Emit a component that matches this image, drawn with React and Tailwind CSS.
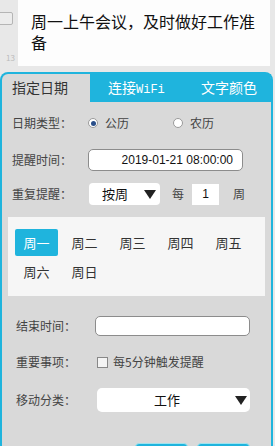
const CYAN = 'bg-[#1fb4dd]'

const DAYS = ['周一', '周二', '周三', '周四', '周五', '周六', '周日']

function Radio({ checked }) {
  return (
    <span className="w-[10px] h-[10px] rounded-full border border-[#9a9a9a] bg-white flex items-center justify-center">
      {checked && <span className="w-[5px] h-[5px] rounded-full bg-[#2a4f8a]" />}
    </span>
  )
}

function Arrow() {
  return (
    <svg width="12" height="9" viewBox="0 0 12 9">
      <path d="M0 0 L12 0 L6 9 Z" fill="#222" />
    </svg>
  )
}

export default function App() {
  return (
    <div className="w-[275px] h-[446px] overflow-hidden bg-[#e8e8e8] text-[#333] font-['Noto_Sans_CJK_SC','Liberation_Sans',sans-serif]">
      {/* note preview */}
      <div className="flex h-[66px]">
        <div className="w-[18px] relative">
          <div className="absolute left-[-4px] top-[12px] w-[17px] h-[13px] border border-[#b5b5b5] rounded-[2px] bg-[#ececec]" />
          <span className="absolute left-[6px] top-[54px] text-[8px] text-[#bbb] leading-none">13</span>
        </div>
        <div className="w-[252px] bg-[#fdfdfd] pl-[13px] pr-2 pt-[11px] text-[16px] leading-[21px] text-[#111]">
          周一上午会议，及时做好工作准备
        </div>
      </div>

      {/* panel */}
      <div className="mt-[6px] w-[273px] border-x-2 border-t-2 border-[#1fb4dd] rounded-t-[8px] bg-[#d9d9d9]">
        <div className="flex h-[29px] -mt-px">
          <div className="w-[88px] flex items-center pl-[10px] text-[14px] text-[#333]">指定日期</div>
          <div className={`flex-1 flex items-center ${CYAN} rounded-tr-[6px] text-white text-[14px]`}>
            <span className="ml-[18px]">连接<span className="font-['Liberation_Mono',monospace] text-[12px]">WiFi</span></span>
            <span className="ml-auto mr-[14px]">文字颜色</span>
          </div>
        </div>

        <div className="flex flex-col pl-[10px] text-[12px] text-[#444]">
          <div className="mt-[9px] h-[24px] flex items-center">
            <span className="w-[76px]">日期类型：</span>
            <Radio checked />
            <span className="ml-[7px]">公历</span>
            <span className="ml-[44px]"><Radio /></span>
            <span className="ml-[7px]">农历</span>
          </div>

          <div className="mt-[14px] h-[22px] flex items-center">
            <span className="w-[76px]">提醒时间：</span>
            <div className="w-[155px] h-[22px] bg-white border border-[#8c8c8c] rounded-[5px] flex items-center justify-end pr-[9px] text-[12px] text-[#111] font-['Liberation_Sans',sans-serif]">
              2019-01-21 08:00:00
            </div>
          </div>

          <div className="mt-[12px] h-[22px] flex items-center">
            <span className="w-[77px]">重复提醒：</span>
            <div className="w-[71px] h-[22px] bg-white rounded-[4px] flex items-center pl-[13px] pr-[4px] text-[13px] text-[#111]">
              <span>按周</span>
              <span className="ml-auto"><Arrow /></span>
            </div>
            <span className="ml-[12px]">每</span>
            <div className="ml-[8px] w-[27px] h-[21px] bg-white flex items-center justify-center text-[12px] text-[#111] font-['Liberation_Sans',sans-serif]">1</div>
            <span className="ml-[14px]">周</span>
          </div>
        </div>

        <div className="mt-[12px] ml-[6px] w-[257px] h-[79px] bg-[#f6f6f6] pt-[12px] pl-[7px]">
          <div className="grid grid-cols-[repeat(5,43px)] gap-x-[5px] gap-y-[2px] text-[13px] text-[#333]">
            {DAYS.map((d, i) => (
              <div
                key={d}
                className={`h-[27px] flex items-center justify-center rounded-[2px] ${i === 0 ? 'bg-[#1fb4dd] text-white' : ''}`}
              >
                {d}
              </div>
            ))}
          </div>
        </div>

        <div className="flex flex-col pl-[14px] text-[12px] text-[#444]">
          <div className="mt-[20px] h-[20px] flex items-center">
            <span className="w-[79px]">结束时间：</span>
            <div className="w-[155px] h-[20px] bg-white border border-[#8c8c8c] rounded-[5px]" />
          </div>

          <div className="mt-[16px] h-[20px] flex items-center">
            <span className="w-[81px]">重要事项：</span>
            <span className="w-[11px] h-[11px] border border-[#888] bg-[#f4f4f4]" />
            <span className="ml-[5px]">每5分钟触发提醒</span>
          </div>

          <div className="mt-[16px] h-[24px] flex items-center">
            <span className="w-[81px]">移动分类：</span>
            <div className="w-[153px] h-[24px] bg-white rounded-[5px] flex items-center pr-[3px] text-[13px] text-[#111]">
              <span className="ml-[57px]">工作</span>
              <span className="ml-auto"><Arrow /></span>
            </div>
          </div>

          <div className="mt-[31px] flex gap-[9px] pl-[119px]">
            <div className="w-[53px] h-[10px] bg-[#1fb4dd] border border-[#9fe3ee] rounded-t-[4px]" />
            <div className="w-[53px] h-[10px] bg-[#1fb4dd] border border-[#9fe3ee] rounded-t-[4px]" />
          </div>
        </div>
      </div>
    </div>
  )
}
